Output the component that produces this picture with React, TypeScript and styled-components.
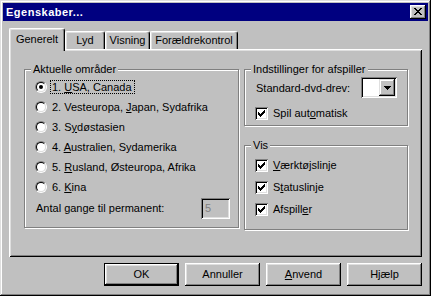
import React from 'react';
import styled, { createGlobalStyle } from 'styled-components';

const GlobalStyle = createGlobalStyle`
	html, body {
		margin: 0;
		padding: 0;
		background: #c0c0c0;
	}

	body {
		font-family: "Liberation Sans", Arial, sans-serif;
		font-size: 11px;
		color: #000;
	}
`;

const raised = `
	box-shadow: inset -1px -1px 0 #000, inset 1px 1px 0 #fff, inset -2px -2px 0 #808080, inset 2px 2px 0 #dfdfdf;
`;

const sunken = `
	box-shadow: inset 1px 1px 0 #808080, inset -1px -1px 0 #fff, inset 2px 2px 0 #000, inset -2px -2px 0 #dfdfdf;
`;

const Window = styled.div`
	width: 431px;
	height: 296px;
	box-sizing: border-box;
	padding: 3px;

	display: flex;
	flex-direction: column;

	background: #c0c0c0;
	box-shadow: inset -1px -1px 0 #000, inset 1px 1px 0 #dfdfdf, inset -2px -2px 0 #808080, inset 2px 2px 0 #fff;
`;

const TitleBar = styled.div`
	height: 18px;
	flex-shrink: 0;

	display: flex;
	align-items: center;
	justify-content: space-between;

	padding: 0 2px 0 3px;
	background: #000080;
`;

const TitleText = styled.div`
	font-weight: bold;
	letter-spacing: 0.5px;
	color: #fff;
	line-height: 13px;
`;

const CloseButton = styled.div`
	width: 16px;
	height: 14px;
	box-sizing: border-box;

	display: flex;
	align-items: center;
	justify-content: center;
	padding: 0 1px 1px 0;

	background: #c0c0c0;
	${raised}
`;

const Body = styled.div`
	flex: 1;
	display: flex;
	flex-direction: column;
	padding: 7px 6px 0 6px;
`;

const TabRow = styled.div`
	height: 21px;
	display: flex;
	align-items: flex-end;
`;

const Tab = styled.div<{ $active?: boolean; $w: number }>`
	position: relative;
	z-index: ${(p) => (p.$active ? 2 : 0)};

	width: ${(p) => p.$w}px;
	height: ${(p) => (p.$active ? 23 : 18)}px;
	margin-bottom: ${(p) => (p.$active ? -2 : 0)}px;
	box-sizing: border-box;

	display: flex;
	justify-content: center;
	padding-top: ${(p) => (p.$active ? 4 : 2)}px;
	line-height: 13px;

	background: #c0c0c0;
	border-top: 1px solid #fff;
	border-left: 1px solid #fff;
	border-right: 1px solid #000;
	border-radius: 2px 3px 0 0;
	box-shadow: inset -1px 0 0 #808080, inset 1px 1px 0 #dfdfdf;
`;

const Panel = styled.div`
	height: 208px;
	box-sizing: border-box;

	display: flex;
	align-items: flex-start;
	gap: 5px;
	padding: 20px 0 0 15px;

	box-shadow: inset 1px 1px 0 #fff, inset -1px -1px 0 #000, inset 2px 2px 0 #dfdfdf, inset -2px -2px 0 #808080;
`;

const Group = styled.div<{ $w: number; $h: number }>`
	width: ${(p) => p.$w}px;
	height: ${(p) => p.$h}px;
	box-sizing: border-box;

	display: flex;
	flex-direction: column;

	border: 1px solid #808080;
	box-shadow: inset 1px 1px 0 #fff, 1px 1px 0 #fff;
`;

const Legend = styled.div`
	align-self: flex-start;
	height: 13px;
	line-height: 13px;

	margin: -7px 0 -6px 6px;
	padding: 0 2px;

	background: #c0c0c0;
`;

const GroupBody = styled.div<{ $pad: string }>`
	display: flex;
	flex-direction: column;
	padding: ${(p) => p.$pad};
`;

const RightColumn = styled.div`
	display: flex;
	flex-direction: column;
	gap: 19px;
`;

const Row = styled.div<{ $h: number; $mt?: number }>`
	height: ${(p) => p.$h}px;
	margin-top: ${(p) => p.$mt ?? 0}px;
	display: flex;
	align-items: center;
`;

const RadioOuter = styled.span`
	width: 12px;
	height: 12px;
	box-sizing: border-box;
	flex-shrink: 0;

	display: flex;

	border: 1px solid;
	border-color: #808080 #fff #fff #808080;
	border-radius: 50%;
`;

const RadioInner = styled.span`
	flex: 1;

	display: flex;
	align-items: center;
	justify-content: center;

	border: 1px solid;
	border-color: #000 #dfdfdf #dfdfdf #000;
	border-radius: 50%;
	background: #fff;
`;

const RadioDot = styled.span`
	width: 4px;
	height: 4px;
	border-radius: 50%;
	background: #000;
`;

const OptionLabel = styled.span<{ $focus?: boolean }>`
	margin-left: 3px;
	padding: 0 2px 0 1px;
	line-height: 12px;
	white-space: nowrap;

	border: 1px dotted ${(p) => (p.$focus ? '#000' : 'transparent')};
`;

const CheckBox = styled.span`
	width: 13px;
	height: 13px;
	box-sizing: border-box;
	flex-shrink: 0;

	display: flex;
	align-items: center;
	justify-content: center;

	background: #fff;
	${sunken}
`;

const CheckText = styled.span`
	margin-left: 5px;
	line-height: 13px;
	white-space: nowrap;
`;

const Key = styled.span`
	text-decoration: underline;
	text-underline-offset: 1px;
`;

const FieldLabel = styled.span`
	margin-left: 1px;
	white-space: nowrap;
`;

const DisabledInput = styled.div`
	width: 29px;
	height: 21px;
	box-sizing: border-box;
	margin-left: auto;

	padding: 0 0 0 4px;
	line-height: 21px;
	color: #808080;

	background: #c0c0c0;
	${sunken}
`;

const Combo = styled.div`
	width: 36px;
	height: 21px;
	box-sizing: border-box;
	margin-left: auto;

	display: flex;
	justify-content: flex-end;
	padding: 2px;

	background: #fff;
	${sunken}
`;

const ComboButton = styled.div`
	width: 16px;
	height: 17px;

	display: flex;
	align-items: center;
	justify-content: center;

	background: #c0c0c0;
	box-shadow: inset -1px -1px 0 #000, inset 1px 1px 0 #dfdfdf, inset -2px -2px 0 #808080, inset 2px 2px 0 #fff;
`;

const ButtonRow = styled.div`
	display: flex;
	justify-content: flex-end;
	gap: 6px;
	margin-top: 6px;
`;

const Button = styled.div<{ $default?: boolean }>`
	width: 75px;
	height: 23px;
	box-sizing: border-box;

	display: flex;
	align-items: center;
	justify-content: center;
	line-height: 13px;

	background: #c0c0c0;
	border: ${(p) => (p.$default ? '1px solid #000' : 'none')};
	${raised}
`;

function CloseIcon() {
	return (
		<svg width="8" height="7" viewBox="0 0 8 7" shapeRendering="crispEdges">
			<path
				fill="#000"
				d="M0 0h2v1H0zM6 0h2v1H6zM1 1h2v1H1zM5 1h2v1H5zM2 2h4v1H2zM3 3h2v1H3zM2 4h4v1H2zM1 5h2v1H1zM5 5h2v1H5zM0 6h2v1H0zM6 6h2v1H6z"
			/>
		</svg>
	);
}

function CheckMark() {
	return (
		<svg width="7" height="7" viewBox="0 0 7 7" shapeRendering="crispEdges">
			<path
				fill="#000"
				d="M6 0h1v1H6zM5 1h2v1H5zM0 2h1v1H0zM4 2h3v1H4zM0 3h2v1H0zM3 3h3v1H3zM0 4h5v1H0zM1 5h3v1H1zM2 6h1v1H2z"
			/>
		</svg>
	);
}

function DownArrow() {
	return (
		<svg width="7" height="4" viewBox="0 0 7 4" shapeRendering="crispEdges">
			<path fill="#000" d="M0 0h7v1H0zM1 1h5v1H1zM2 2h3v1H2zM3 3h1v1H3z" />
		</svg>
	);
}

function Radio({ checked, focus, children }: { checked?: boolean; focus?: boolean; children: React.ReactNode }) {
	return (
		<Row $h={20}>
			<RadioOuter>
				<RadioInner>{checked ? <RadioDot /> : null}</RadioInner>
			</RadioOuter>
			<OptionLabel $focus={focus}>{children}</OptionLabel>
		</Row>
	);
}

function Check({ h, mt, children }: { h: number; mt?: number; children: React.ReactNode }) {
	return (
		<Row $h={h} $mt={mt}>
			<CheckBox>
				<CheckMark />
			</CheckBox>
			<CheckText>{children}</CheckText>
		</Row>
	);
}

export default function App(): React.ReactElement {
	return (
		<>
			<GlobalStyle />
			<Window>
				<TitleBar>
					<TitleText>Egenskaber...</TitleText>
					<CloseButton>
						<CloseIcon />
					</CloseButton>
				</TitleBar>
				<Body>
					<TabRow>
						<Tab $active $w={56}>Generelt</Tab>
						<Tab $w={40}>Lyd</Tab>
						<Tab $w={45}>Visning</Tab>
						<Tab $w={88}>Forældrekontrol</Tab>
					</TabRow>
					<Panel>
						<Group $w={215} $h={159}>
							<Legend>Aktuelle områder</Legend>
							<GroupBody $pad="7px 8px 0 10px">
								<Radio checked focus>
									1. <Key>U</Key>SA, Canada
								</Radio>
								<Radio>
									2. Vesteuropa, <Key>J</Key>apan, Sydafrika
								</Radio>
								<Radio>
									3. S<Key>y</Key>døstasien
								</Radio>
								<Radio>
									4. <Key>A</Key>ustralien, Sydamerika
								</Radio>
								<Radio>
									5. <Key>R</Key>usland, Østeuropa, Afrika
								</Radio>
								<Radio>
									6. <Key>K</Key>ina
								</Radio>
								<Row $h={22}>
									<FieldLabel>Antal gange til permanent:</FieldLabel>
									<DisabledInput>5</DisabledInput>
								</Row>
							</GroupBody>
						</Group>
						<RightColumn>
							<Group $w={164} $h={57}>
								<Legend>Indstillinger for afspiller</Legend>
								<GroupBody $pad="7px 10px 0 10px">
									<Row $h={21}>
										<FieldLabel>Standard-dvd-drev:</FieldLabel>
										<Combo>
											<ComboButton>
												<DownArrow />
											</ComboButton>
										</Combo>
									</Row>
									<Check h={20} mt={5}>
										Spil aut<Key>o</Key>matisk
									</Check>
								</GroupBody>
							</Group>
							<Group $w={164} $h={85}>
								<Legend>Vis</Legend>
								<GroupBody $pad="8px 10px 0 10px">
									<Check h={22}>
										<Key>V</Key>ærktøjslinje
									</Check>
									<Check h={22}>
										S<Key>t</Key>atuslinje
									</Check>
									<Check h={22}>
										Afspill<Key>e</Key>r
									</Check>
								</GroupBody>
							</Group>
						</RightColumn>
					</Panel>
					<ButtonRow>
						<Button $default>OK</Button>
						<Button>Annuller</Button>
						<Button>
							<Key>A</Key>nvend
						</Button>
						<Button>Hjælp</Button>
					</ButtonRow>
				</Body>
			</Window>
		</>
	);
}
